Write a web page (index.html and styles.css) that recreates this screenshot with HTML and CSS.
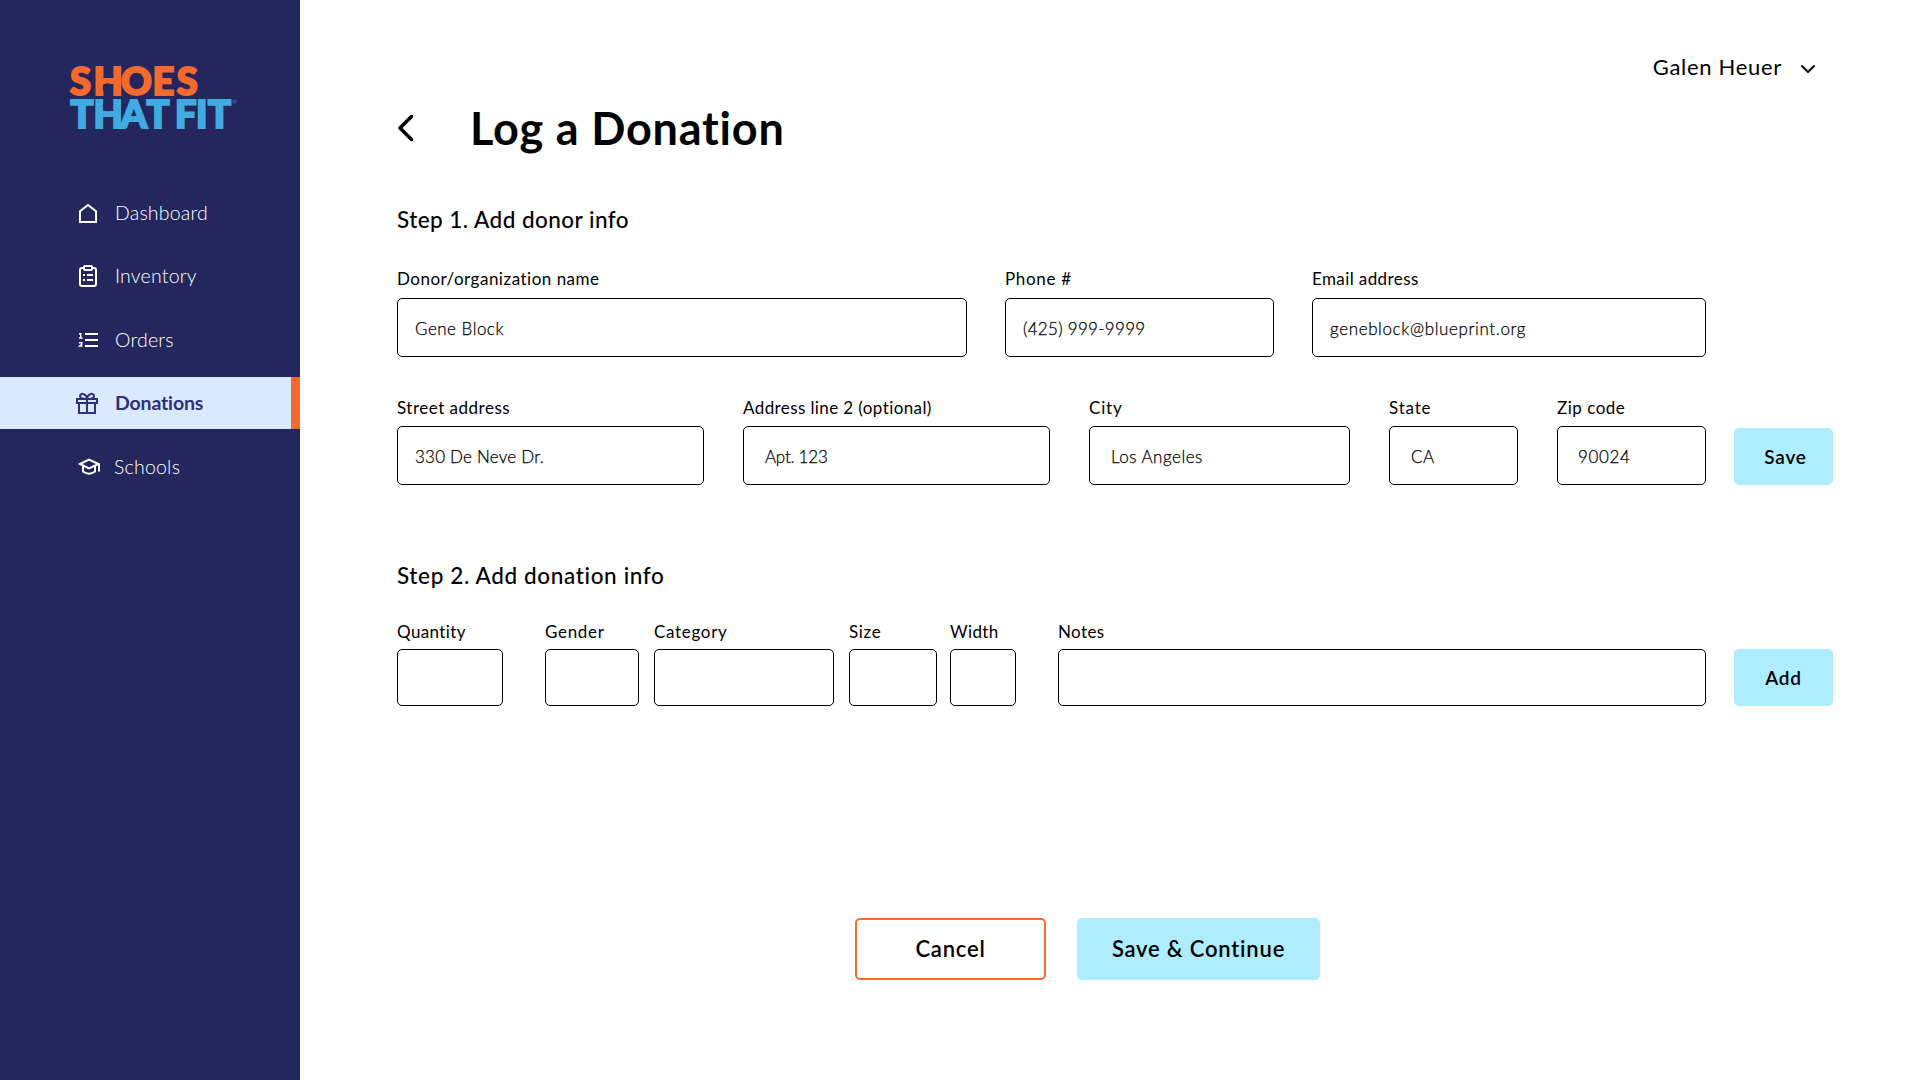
FILE: index.html
```html
<!DOCTYPE html>
<html lang="en">
<head>
<meta charset="utf-8">
<title>Log a Donation</title>
<link rel="stylesheet" href="styles.css">
</head>
<body>
<div class="app">
  <aside class="sidebar">
    <svg class="logo" width="170" height="72" viewBox="0 0 170 72" role="img" aria-label="Shoes That Fit">
      <text class="logo-top" x="1 24.500 52 83.500 107.800" y="33.600">SHOES</text>
      <text class="logo-bottom" x="1.500 24.500 51.500 77.500" y="67">THAT</text>
      <text class="logo-bottom" x="106 127 139" y="67">FIT</text>
      <circle class="logo-notch" cx="38.500" cy="27" r="4.800"/>
      <circle class="logo-notch" cx="38.500" cy="45.500" r="4.800"/>
      <circle class="logo-mark" cx="165.500" cy="40.500" r="1.500"/>
    </svg>
    <nav class="nav">
      <a class="nav-item"><svg class="icon" width="24" height="24" viewBox="0 0 24 24"><path d="M4 21V10.200L12 4l8 6.200V21z"/></svg><span class="t1">Dashboard</span></a>
      <a class="nav-item"><svg class="icon" width="24" height="24" viewBox="0 0 24 24"><rect x="4" y="4" width="16" height="18" rx="2"/><rect x="8" y="2" width="8" height="4" rx="1" class="knock"/><path d="M7 11h2M11 11h6M7 16h2M11 16h6"/></svg><span class="t1">Inventory</span></a>
      <a class="nav-item"><svg class="icon" width="24" height="24" viewBox="0 0 24 24"><path d="M9 6h13M9 12h13M9 18h13"/><path class="thin" d="M3 5.700h1.700V10M3 10h3.500M3 14.700h2.800v1.500L3.700 18h2.800"/></svg><span class="t1">Orders</span></a>
      <a class="nav-item active"><svg class="icon" width="24" height="24" viewBox="0 0 24 24"><path d="M1 8h20v4H1zM3 12v10h16V12M11 8v14M11 8C7 8 4 7.300 4 5c0-3 6-3.500 7 3c1-6.500 7-6 7-3c0 2.300-3 3-7 3"/></svg><span>Donations</span></a>
      <a class="nav-item"><svg class="icon" width="24" height="24" viewBox="0 0 24 24"><path d="M4 9L13 4.500L22.500 9L13 13.500zM7 11.500v5q6 4.500 12 0v-5M23 9v7.500"/></svg><span class="t2">Schools</span></a>
    </nav>
  </aside>
  <main class="main">
    <div class="user"><span>Galen Heuer</span><svg width="16" height="10" viewBox="0 0 16 10"><path d="M2 2l6 6l6-6"/></svg></div>
    <header class="heading"><svg class="back" width="18" height="28" viewBox="0 0 18 28"><path d="M14.500 2.500L3 14l11.500 11.500"/></svg><h1>Log a Donation</h1></header>

    <section class="step donor">
      <h2>Step 1. Add donor info</h2>
      <div class="row row-contact">
        <label class="field"><span class="t5">Donor/organization name</span><div class="input"><span class="t5">Gene Block</span></div></label>
        <label class="field"><span class="t7">Phone #</span><div class="input"><span class="t3">(425) 999-9999</span></div></label>
        <label class="field"><span class="t4">Email address</span><div class="input"><span class="t6">geneblock@blueprint.org</span></div></label>
      </div>
      <div class="row with-button">
        <div class="row row-address">
          <label class="field"><span class="t5">Street address</span><div class="input"><span class="t2">330 De Neve Dr.</span></div></label>
          <label class="field"><span class="t4">Address line 2 (optional)</span><div class="input wide"><span class="tn">Apt. 123</span></div></label>
          <label class="field"><span class="t8">City</span><div class="input wide"><span class="t5">Los Angeles</span></div></label>
          <label class="field"><span class="t8">State</span><div class="input wide"><span class="t4">CA</span></div></label>
          <label class="field"><span class="t5">Zip code</span><div class="input wide zip"><span class="t6">90024</span></div></label>
        </div>
        <button class="btn small save">Save</button>
      </div>
    </section>

    <section class="step donation">
      <h2>Step 2. Add donation info</h2>
      <div class="row with-button">
        <div class="row row-items">
          <label class="field"><span class="t4">Quantity</span><div class="input"></div></label>
          <div class="row row-shoe">
            <label class="field"><span class="t7">Gender</span><div class="input"></div></label>
            <label class="field"><span class="t7">Category</span><div class="input"></div></label>
            <label class="field"><span class="t7">Size</span><div class="input"></div></label>
            <label class="field"><span class="t4">Width</span><div class="input"></div></label>
          </div>
          <label class="field"><span class="t4">Notes</span><div class="input"></div></label>
        </div>
        <button class="btn small">Add</button>
      </div>
    </section>

    <footer class="actions">
      <button class="btn outline">Cancel</button>
      <button class="btn primary">Save &amp; Continue</button>
    </footer>
  </main>
</div>
</body>
</html>
```
FILE: styles.css
```css
* { box-sizing: border-box; }

body {
  margin: 0;
  font-family: Lato, "Open Sans", sans-serif;
  font-variant-ligatures: none;
  color: #000;
  background: #fff;
}

.app { display: flex; width: 1920px; height: 1080px; }

.sidebar {
  width: 300px;
  flex: none;
  background: #24275d;
  padding-top: 61px;
}

.logo { display: block; margin-left: 69px; overflow: visible; }
.logo text { font-weight: 900; font-size: 38px; stroke-width: 2; }
.logo-top { fill: #f3692e; stroke: #f3692e; }
.logo-bottom { fill: #41abe1; stroke: #41abe1; }
.logo-notch { fill: #24275d; }
.logo-mark { fill: none; stroke: #41abe1; stroke-width: .6; }

.nav { display: flex; flex-direction: column; gap: 11.3px; margin-top: 54px; }
.nav-item {
  display: flex;
  align-items: center;
  gap: 15px;
  height: 52px;
  padding-left: 76px;
  font-size: 19.5px;
  line-height: 24px;
  font-weight: 300;
  color: #fff;
}
.nav-item:last-child { padding-top: 2px; gap: 14px; }
.nav-item.active {
  background: #dae9ff;
  border-right: 9px solid #f3692e;
  color: #2e3079;
  font-weight: 700;
  letter-spacing: -.16px;
}

.icon { flex: none; fill: none; stroke: currentColor; stroke-width: 2; }
.icon .knock { fill: #24275d; }
.icon .thin { stroke-width: 1.5; }

/* letter-spacing steps */
.tn { letter-spacing: -.23px; }
.t1 { letter-spacing: .2px; }
.t2 { letter-spacing: .22px; }
.t3 { letter-spacing: .3px; }
.t4 { letter-spacing: .4px; }
.t5 { letter-spacing: .5px; }
.t6 { letter-spacing: .62px; }
.t7 { letter-spacing: .68px; }
.t8 { letter-spacing: .8px; }

.main { flex: none; width: 1620px; padding: 53px 87px 0 97px; }

.user {
  display: flex;
  justify-content: flex-end;
  align-items: center;
  gap: 18px;
  height: 28px;
  padding-right: 17px;
  font-size: 22px;
  line-height: 28px;
  letter-spacing: .7px;
}
.user svg, .back { fill: none; stroke: #000; stroke-width: 2; stroke-linecap: round; stroke-linejoin: round; }
.user svg { margin-top: 4px; }
.back { stroke-width: 3.5; margin-top: 2px; }

.heading { display: flex; align-items: center; gap: 55px; height: 54px; margin-top: 19px; }
h1 { margin: 0; padding-top: 1px; font-size: 45px; line-height: 54px; font-weight: 700; letter-spacing: .8px; }
h2 { margin: 0; height: 28px; font-size: 22.5px; line-height: 29px; font-weight: 500; letter-spacing: .46px; }

.donor { margin-top: 51px; }
.donation { margin-top: 76px; }
.donation h2 { letter-spacing: .64px; }

.row { display: grid; align-items: end; }
.row-contact { grid-template-columns: 570px 269px 394px; column-gap: 38px; margin-top: 34px; }
.with-button { grid-template-columns: 1309px 99px; column-gap: 28px; }
.donor .with-button { margin-top: 39px; }
.donation .with-button { margin-top: 31px; }
.row-address { grid-template-columns: 307px 307px 261px 129px 149px; column-gap: 39px; }
.row-items { grid-template-columns: 106px 471px 648px; column-gap: 42px; }
.row-shoe { grid-template-columns: 94px 180px 88px 66px; column-gap: 15px; }
.row-shoe .field:last-child { margin: 0 2px 0 -2px; }

.field { display: flex; flex-direction: column; gap: 7px; font-size: 17px; line-height: 24px; }
.with-button .field { gap: 6px; }
.donation .with-button .field { gap: 5px; }
.input {
  display: flex;
  align-items: center;
  height: 59px;
  padding: 3px 17px 0;
  border: 1px solid #000;
  border-radius: 5px;
  font-weight: 300;
  -webkit-text-stroke: .25px #000;
}
.input.wide { padding-left: 21px; }
.input.zip { padding-left: 20px; }
.donation .input { height: 57px; }

.btn {
  font: 600 22px/28px Lato, "Open Sans", sans-serif;
  font-variant-ligatures: none;
  letter-spacing: .8px;
  color: #000;
  background: #aeecff;
  border: 0;
  border-radius: 5px;
  padding: 0;
}
.btn.small { width: 99px; height: 57px; font-size: 19px; }
.btn.save { padding: 1px 0 0 4px; }

.actions { display: flex; gap: 31px; margin: 212px 0 0 458px; }
.btn.outline { width: 191px; height: 62px; background: #fff; border: 2px solid #ff6a2b; }
.primary { width: 243px; height: 62px; }
```
